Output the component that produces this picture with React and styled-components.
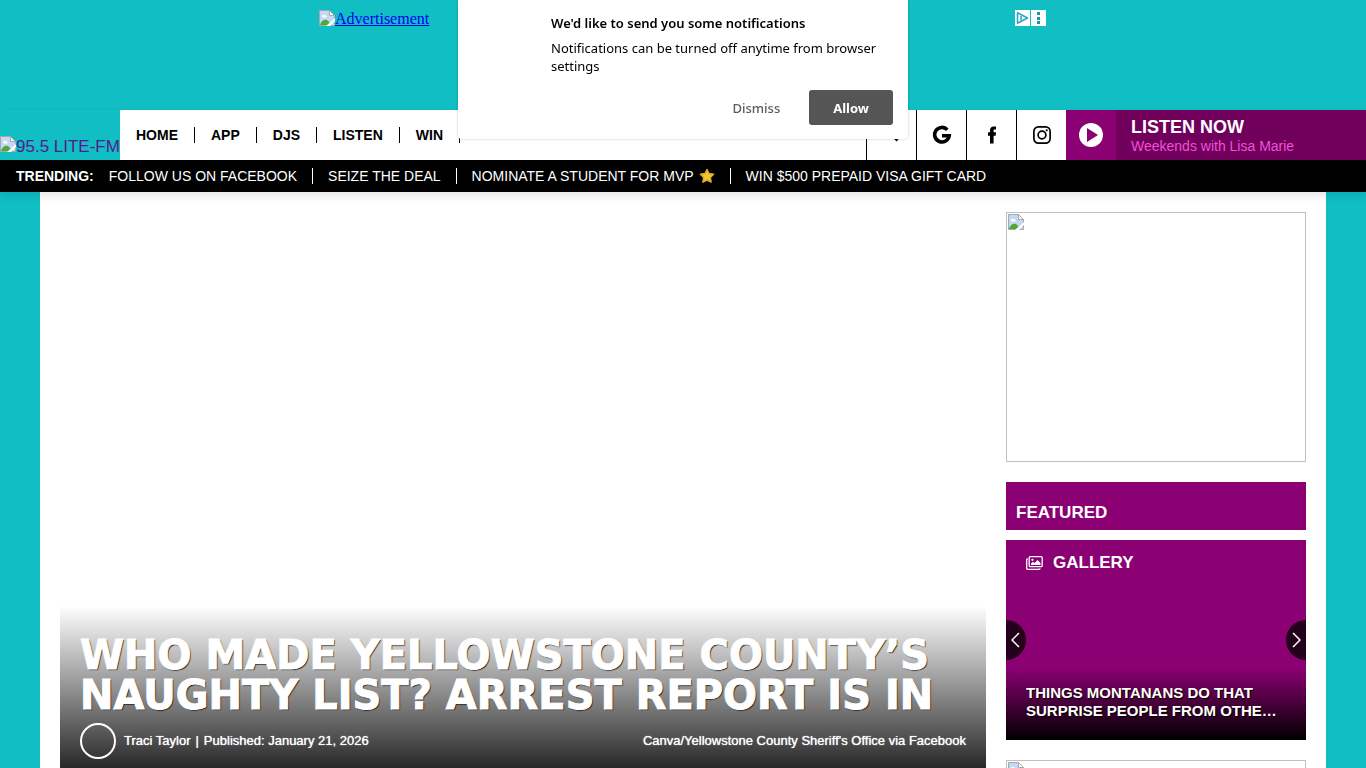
import React from "react";
import styled, { createGlobalStyle, css } from "styled-components";

const Global = createGlobalStyle`
  *, *::before, *::after { box-sizing: border-box; }
  body {
    margin: 0;
    background: #10bec4;
    font-family: "Liberation Sans", Arial, sans-serif;
    color: #000;
  }
  h1, h2, h3, p, ul { margin: 0; padding: 0; }
  ul { list-style: none; }
  a { color: inherit; text-decoration: none; }
  button { border: 0; padding: 0; background: none; font: inherit; color: inherit; cursor: pointer; }
`;

const AdStrip = styled.div`
  display: flex;
  justify-content: space-between;
  width: 728px;
  max-width: 100%;
  height: 110px;
  margin: 0 auto;
  padding-top: 10px;
`;

const AdLink = styled.a`
  display: flex;
  align-items: flex-start;
  height: 18px;
  font: 16px/18px "Liberation Serif", "Times New Roman", serif;
  color: #0000ee;
  text-decoration: underline;
`;

const AdBadges = styled.div`
  display: flex;
  gap: 1px;
  height: 16px;
  padding-right: 1px;
`;

const BadgeButton = styled.button`
  display: flex;
  width: 15px;
  height: 16px;
  background: #fff;
`;

const Header = styled.header`
  position: relative;
  box-shadow: 0 4px 8px rgba(0, 0, 0, 0.1);
`;

const TopBar = styled.div`
  display: flex;
  height: 50px;
`;

const Logo = styled.a`
  display: flex;
  align-items: flex-start;
  width: 120px;
  padding-top: 26px;
  font-size: 17px;
  line-height: 22px;
  color: #551a8b;
  white-space: nowrap;
`;

const Nav = styled.nav`
  flex: 1;
  display: flex;
  align-items: center;
  background: #fff;
`;

const LinkList = styled.ul`
  display: flex;
  align-items: center;
`;

const NavItem = styled.li`
  padding: 0 16px;
  border-right: 1px solid #000;
  font-size: 14px;
  font-weight: bold;
  line-height: 16px;
`;

const Tools = styled.div`
  display: flex;
  background: #fff;
`;

const ToolLink = styled.a`
  display: flex;
  align-items: center;
  justify-content: center;
  width: 50px;
  border-left: 1px solid #000;
`;

const Listen = styled.a`
  display: flex;
  width: 300px;
  background: #70005c;
`;

const PlayBox = styled.span`
  display: flex;
  align-items: center;
  justify-content: center;
  width: 50px;
  background: #8b0072;
`;

const ListenText = styled.span`
  display: flex;
  flex-direction: column;
  padding: 7px 15px;
`;

const ListenTitle = styled.strong`
  font-size: 18px;
  line-height: 20px;
  color: #fff;
`;

const ListenShow = styled.span`
  font-size: 14px;
  line-height: 18px;
  color: #f050d8;
`;

const Trending = styled.div`
  display: flex;
  align-items: center;
  height: 32px;
  padding-left: 16px;
  background: #000;
  color: #fff;
  font-size: 14px;
  line-height: 16px;
`;

const TrendItem = styled.li`
  display: flex;
  align-items: center;
  gap: 5px;
  padding: 0 15px;
  & + & { border-left: 1px solid #fff; }
`;

const Main = styled.main`
  display: flex;
  gap: 20px;
  margin: 0 40px;
  padding: 20px;
  background: #fff;
`;

const Article = styled.article`
  flex: 1;
  min-width: 0;
`;

const Hero = styled.div`
  display: flex;
  flex-direction: column;
  justify-content: flex-end;
  min-height: 567px;
`;

const HeroCaption = styled.div`
  padding: 29px 20px 20px;
  background: linear-gradient(rgba(0, 0, 0, 0), rgba(0, 0, 0, 0.9));
  color: #fff;
`;

const Headline = styled.h1`
  font-family: "Arial Black", "DejaVu Sans", sans-serif;
  font-size: 40px;
  font-weight: 900;
  line-height: 40px;
  text-transform: uppercase;
  -webkit-text-stroke: 1px #fff;
  text-shadow: 1px 1px 1px #000;
`;

const Byline = styled.div`
  display: flex;
  align-items: center;
  gap: 8px;
  margin-top: 8px;
  font-size: 13px;
  line-height: 16px;
  text-shadow: 0 0 1px #fff;
`;

const Avatar = styled.span`
  width: 36px;
  height: 36px;
  border: 2px solid #fff;
  border-radius: 50%;
`;

const Meta = styled.span`
  display: flex;
  gap: 5px;
`;

const Credit = styled.span`
  margin-left: auto;
`;

const Sidebar = styled.aside`
  width: 300px;
  flex: none;
`;

const EmptyAd = styled.div`
  height: 250px;
  padding: 1px;
  border: 1px solid silver;
`;

const FeaturedTitle = styled.h2`
  margin: 20px 0 10px;
  padding: 21px 10px 7px;
  background: #8b0072;
  color: #fff;
  font-size: 17px;
  line-height: 20px;
`;

const Card = styled.section`
  position: relative;
  display: flex;
  flex-direction: column;
  justify-content: space-between;
  height: 200px;
  margin-bottom: 20px;
  overflow: hidden;
  background: #8b0072;
  color: #fff;
`;

const CardKind = styled.div`
  display: flex;
  align-items: center;
  gap: 10px;
  padding: 13px 20px;
  font-size: 17px;
  font-weight: bold;
  line-height: 20px;
`;

const CardTitle = styled.h3`
  padding: 16px 20px 20px;
  background: linear-gradient(rgba(0, 0, 0, 0), #000);
  font-size: 15px;
  line-height: 18px;
  text-shadow: 1px 1px 1px #000;
`;

const CardTitleText = styled.a`
  display: -webkit-box;
  -webkit-box-orient: vertical;
  -webkit-line-clamp: 2;
  overflow: hidden;
`;

const Arrow = styled.button`
  position: absolute;
  top: 80px;
  display: flex;
  align-items: center;
  width: 20px;
  height: 40px;
  background: rgba(0, 0, 0, 0.75);
  ${(p) =>
    p.$side === "left"
      ? css`left: 0; border-radius: 0 20px 20px 0; padding-left: 5px;`
      : css`right: 0; border-radius: 20px 0 0 20px; padding-left: 6px;`}
`;

const Prompt = styled.div`
  position: fixed;
  top: 0;
  left: 50%;
  z-index: 10;
  width: 450px;
  margin-left: -225px;
  padding: 14px 15px 14px 93px;
  background: #fff;
  border-radius: 0 0 4px 4px;
  box-shadow: 0 0 3px rgba(0, 0, 0, 0.2);
  font-family: "Segoe UI", "Noto Sans", "Open Sans", sans-serif;
  font-size: 13px;
  line-height: 18px;
`;

const PromptTitle = styled.h2`
  margin-bottom: 7px;
  font-size: 13px;
  font-weight: 600;
  line-height: 18px;
`;

const PromptActions = styled.div`
  display: flex;
  justify-content: flex-end;
  gap: 5px;
  margin-top: 15px;
`;

const PromptButton = styled.button`
  height: 35px;
  padding: 0 24px;
  border-radius: 3px;
  font-weight: 500;
  color: #5c5c5c;
  ${(p) => p.$primary && css`background: #555; color: #fff; font-weight: 700;`}
`;

const BrokenImage = () => (
  <svg width="16" height="16" viewBox="0 0 16 16" aria-hidden="true" style={{ flex: "none" }}>
    <path d="M.5.5h10l5 5v10H.5z" fill="#c4d7f5" stroke="#a5a8ad" />
    <path d="M3 6.500c0-2 3-2.500 3.500-.8C8 5.500 8 7.500 6.800 7.500H3.500z" fill="#fff" />
    <path d="M1 15c1-4 4-6 7-5l3 3-2 2z" fill="#4caa38" />
    <path d="M7 16l9-8v3l-5 5z" fill="#fff" />
    <path d="M10.500.5v5h5z" fill="#fff" stroke="#a5a8ad" />
  </svg>
);

const SearchIcon = () => (
  <svg width="18" height="18" viewBox="0 0 18 18" fill="none" stroke="#000" strokeWidth="2.500">
    <circle cx="7" cy="7" r="4.500" />
    <path d="M10 10l4.500 4.500" />
  </svg>
);

const GoogleIcon = () => (
  <svg width="20" height="20" viewBox="0 0 20 20" fill="none" stroke="#000" strokeWidth="3.600">
    <path d="M15.300 4.700A7.300 7.300 0 1 0 17.200 10.800H10" />
  </svg>
);

const FacebookIcon = () => (
  <svg width="10" height="18" viewBox="0 0 10 18">
    <path d="M3 17.500V9.700H1V6.300h2V4.500C3 1.800 4.400.4 6.800.4H9v3.200H7.700c-.8 0-1.100.3-1.100 1v1.700H9l-.3 3.400H6.600v7.800z" />
  </svg>
);

const InstagramIcon = () => (
  <svg width="20" height="20" viewBox="0 0 20 20" fill="none" stroke="#000" strokeWidth="1.700">
    <rect x="1.900" y="1.900" width="16.200" height="16.200" rx="4.500" />
    <circle cx="10" cy="10" r="3.900" />
    <circle cx="14.700" cy="5.300" r="1.100" fill="#000" stroke="none" />
  </svg>
);

const PlayIcon = () => (
  <svg width="24" height="24" viewBox="0 0 24 24">
    <circle cx="12" cy="12" r="12" fill="#fff" />
    <path d="M8 5l11 7-11 7z" fill="#8b0072" />
  </svg>
);

const StarIcon = () => (
  <svg width="16" height="16" viewBox="0 0 16 16" role="img" aria-label="star">
    <path
      d="M8 1.500l2 4.100 4.600.7-3.300 3.200.8 4.600L8 12l-4.100 2.100.8-4.600L1.400 6.300 6 5.600z"
      fill="#f2c531"
      stroke="#e0aa28"
      strokeWidth="1.500"
      strokeLinejoin="round"
    />
  </svg>
);

const GalleryIcon = () => (
  <svg width="17" height="14" viewBox="0 0 17 14" fill="none" stroke="#fff" strokeWidth="1.300">
    <rect x="3.200" y=".7" width="13" height="10" rx="1" />
    <path d="M1.900 3H1.500Q.7 3 .7 4v8.300q0 1 1 1H13q1 0 1-1" />
    <path d="M5 9V7.600l2-1.800 1.500 1.300L11.500 4 14.500 7v2z" fill="#fff" stroke="none" />
    <circle cx="6.400" cy="3.800" r="1.100" fill="#fff" stroke="none" />
  </svg>
);

const Chevron = ({ d }) => (
  <svg width="9" height="16" viewBox="0 0 9 16" fill="none" stroke="#fff" strokeWidth="1.500">
    <path d={d} />
  </svg>
);

const navLinks = ["HOME", "APP", "DJS", "LISTEN", "WIN"];
const trends = [
  { text: "FOLLOW US ON FACEBOOK" },
  { text: "SEIZE THE DEAL" },
  { text: "NOMINATE A STUDENT FOR MVP", star: true },
  { text: "WIN $500 PREPAID VISA GIFT CARD" },
];
const tools = [
  { name: "Search", Icon: SearchIcon },
  { name: "Google", Icon: GoogleIcon },
  { name: "Facebook", Icon: FacebookIcon },
  { name: "Instagram", Icon: InstagramIcon },
];

export default function App() {
  return (
    <>
      <Global />
      <AdStrip>
        <AdLink href="#ad"><BrokenImage />Advertisement</AdLink>
        <AdBadges>
          <BadgeButton aria-label="AdChoices">
            <svg width="15" height="16" viewBox="0 0 15 16" fill="none" stroke="#2fa5c4" strokeWidth="1.600">
              <path d="M2.500 2.800L12.500 8l-10 5.200z" strokeLinejoin="round" />
              <path d="M6 6v4.500" />
            </svg>
          </BadgeButton>
          <BadgeButton aria-label="Ad options">
            <svg width="15" height="16" viewBox="0 0 15 16" fill="#1b93ab">
              <rect x="6" y="2" width="3" height="3" />
              <rect x="6" y="7" width="3" height="3" />
              <rect x="6" y="11" width="3" height="3" />
            </svg>
          </BadgeButton>
        </AdBadges>
      </AdStrip>

      <Header>
        <TopBar>
          <Logo href="#home"><BrokenImage />95.5 LITE-FM</Logo>
          <Nav>
            <LinkList>
              {navLinks.map((n) => (
                <NavItem key={n}><a href={"#" + n.toLowerCase()}>{n}</a></NavItem>
              ))}
            </LinkList>
          </Nav>
          <Tools>
            {tools.map(({ name, Icon }) => (
              <ToolLink key={name} href={"#" + name} aria-label={name}><Icon /></ToolLink>
            ))}
          </Tools>
          <Listen href="#listen-now">
            <PlayBox><PlayIcon /></PlayBox>
            <ListenText>
              <ListenTitle>LISTEN NOW</ListenTitle>
              <ListenShow>Weekends with Lisa Marie</ListenShow>
            </ListenText>
          </Listen>
        </TopBar>
        <Trending>
          <strong>TRENDING:</strong>
          <LinkList>
            {trends.map((t) => (
              <TrendItem key={t.text}>
                <a href="#trend">{t.text}</a>
                {t.star && <StarIcon />}
              </TrendItem>
            ))}
          </LinkList>
        </Trending>
      </Header>

      <Main>
        <Article>
          <Hero>
            <HeroCaption>
              <Headline>Who Made Yellowstone County’s Naughty List? Arrest Report Is In</Headline>
              <Byline>
                <Avatar />
                <Meta>
                  <a href="#author">Traci Taylor</a>
                  <span>|</span>
                  <span>Published: January 21, 2026</span>
                </Meta>
                <Credit>Canva/Yellowstone County Sheriff's Office via Facebook</Credit>
              </Byline>
            </HeroCaption>
          </Hero>
        </Article>
        <Sidebar>
          <EmptyAd><BrokenImage /></EmptyAd>
          <FeaturedTitle>FEATURED</FeaturedTitle>
          <Card>
            <CardKind><GalleryIcon />GALLERY</CardKind>
            <CardTitle>
              <CardTitleText href="#gallery">THINGS MONTANANS DO THAT SURPRISE PEOPLE FROM OTHE…</CardTitleText>
            </CardTitle>
            <Arrow $side="left" aria-label="Previous"><Chevron d="M8 1L1 8l7 7" /></Arrow>
            <Arrow $side="right" aria-label="Next"><Chevron d="M1 1l7 7-7 7" /></Arrow>
          </Card>
          <EmptyAd><BrokenImage /></EmptyAd>
        </Sidebar>
      </Main>

      <Prompt role="dialog" aria-labelledby="prompt-title">
        <PromptTitle id="prompt-title">We'd like to send you some notifications</PromptTitle>
        <p>Notifications can be turned off anytime from browser settings</p>
        <PromptActions>
          <PromptButton>Dismiss</PromptButton>
          <PromptButton $primary>Allow</PromptButton>
        </PromptActions>
      </Prompt>
    </>
  );
}
